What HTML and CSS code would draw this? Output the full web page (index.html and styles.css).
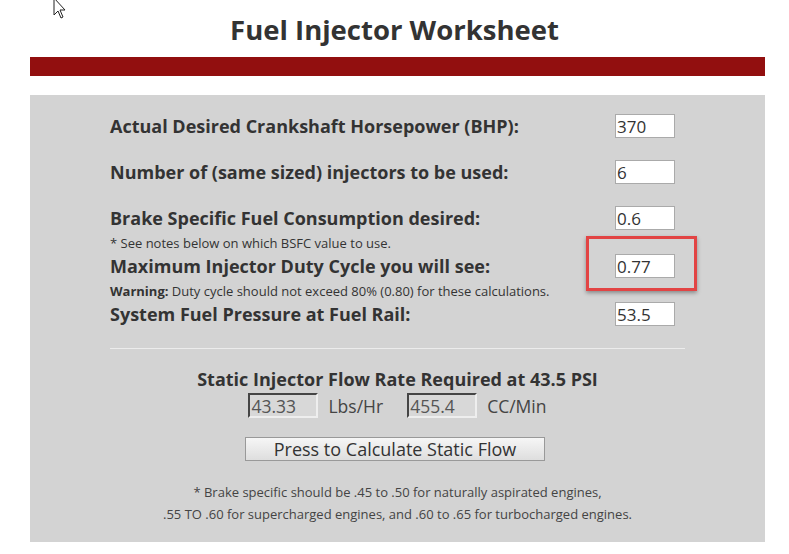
FILE: index.html
```html
<!DOCTYPE html>
<html>
<head>
  <meta charset="UTF-8">
  <title>Fuel Injector Worksheet</title>
  <link rel="stylesheet" href="styles.css">
</head>
<body>
  <svg class="cursor" width="14" height="20" viewBox="0 0 14 20">
    <path d="M1 -2 L1 15 L5 11 L8 18 L10 17 L7 10 L12 10 Z" fill="#fff" stroke="#222" stroke-width="1"/>
  </svg>

  <h1 class="title">Fuel Injector Worksheet</h1>
  <div class="red-bar"></div>

  <div class="panel">
    <div class="inner">
      <div class="row">
        <label for="bhp">Actual Desired Crankshaft Horsepower (BHP):</label>
        <input id="bhp" type="text" value="370">
      </div>
      <div class="row">
        <label for="count">Number of (same sized) injectors to be used:</label>
        <input id="count" type="text" value="6">
      </div>
      <div class="row tight">
        <label for="bsfc">Brake Specific Fuel Consumption desired:</label>
        <input id="bsfc" type="text" value="0.6">
      </div>
      <p class="note">* See notes below on which BSFC value to use.</p>
      <div class="row tight">
        <label for="duty">Maximum Injector Duty Cycle you will see:</label>
        <span class="field-wrap">
          <input id="duty" type="text" value="0.77">
          <span class="highlight"></span>
        </span>
      </div>
      <p class="note"><b>Warning:</b> Duty cycle should not exceed 80% (0.80) for these calculations.</p>
      <div class="row">
        <label for="psi">System Fuel Pressure at Fuel Rail:</label>
        <input id="psi" type="text" value="53.5">
      </div>

      <hr class="divider">

      <h2 class="result-title">Static Injector Flow Rate Required at 43.5 PSI</h2>
      <div class="result-row">
        <input class="out" type="text" value="43.33" readonly>
        <span class="unit">Lbs/Hr</span>
        <input class="out" type="text" value="455.4" readonly>
        <span class="unit">CC/Min</span>
      </div>
      <div class="btn-row">
        <button type="button">Press to Calculate Static Flow</button>
      </div>

      <div class="footnote">
        <p>* Brake specific should be .45 to .50 for naturally aspirated engines,</p>
        <p>.55 TO .60 for supercharged engines, and .60 to .65 for turbocharged engines.</p>
      </div>
    </div>
  </div>
</body>
</html>
```

FILE: styles.css
```css
body {
  margin: 0;
  font-family: "Open Sans", Arial, sans-serif;
  color: #333;
  background-color: #fff;
}

.cursor {
  position: absolute;
  left: 53px;
  top: 0;
}

.title {
  font-size: 27.5px;
  line-height: 36px;
  font-weight: bold;
  text-align: center;
  margin: 12px 0 9px;
  color: #333;
}

.red-bar {
  height: 19px;
  margin: 0 24px 19px 30px;
  background-color: #920f0f;
}

.panel {
  margin: 0 24px 0 30px;
  background-color: #d3d3d3;
  padding: 19px 0 17px;
}

.inner {
  width: 575px;
  margin-left: 80px;
}

.row {
  display: flex;
  align-items: center;
  height: 24px;
  padding-right: 10px;
  margin-bottom: 22px;
}

.row.tight {
  margin-bottom: 0;
}

.row label {
  flex: 1;
  font-size: 18px;
  font-weight: bold;
  color: #333;
}

.row input {
  width: 60px;
  height: 24px;
  box-sizing: border-box;
  border: 1px solid #aaa;
  background: #fff;
  font-family: "Open Sans", Arial, sans-serif;
  font-size: 17px;
  color: #333;
  padding: 0 1px;
}

.field-wrap {
  position: relative;
  display: inline-block;
  height: 24px;
}

.highlight {
  position: absolute;
  left: -29px;
  top: -18px;
  width: 111px;
  height: 55px;
  box-sizing: border-box;
  border: 3px solid #e24444;
  box-shadow: 0 2px 4px rgba(0,0,0,0.35);
}

.note {
  font-size: 13px;
  line-height: 14px;
  margin: 6px 0 4px;
  color: #333;
}

.divider {
  border: none;
  border-top: 1px solid #ececec;
  margin: 22px 0 0;
}

.result-title {
  font-size: 18px;
  line-height: 24px;
  font-weight: bold;
  text-align: center;
  margin: 18px 0 2px;
  color: #333;
}

.result-row {
  display: flex;
  justify-content: center;
  align-items: center;
  height: 25px;
}

.out {
  width: 70px;
  height: 25px;
  box-sizing: border-box;
  border: 2px inset #eee;
  border-top-color: #999;
  border-left-color: #999;
  background: #d8d8d8;
  font-family: "Open Sans", Arial, sans-serif;
  font-size: 17.5px;
  color: #555;
  padding: 0 1px;
}

.unit {
  font-size: 17.5px;
  color: #444;
  margin: 0 24px 0 10px;
}

.unit:last-child {
  margin-right: 0;
}

.btn-row {
  text-align: center;
  margin-top: 19px;
  padding-right: 5px;
}

button {
  width: 300px;
  height: 24px;
  border: 1px solid #999;
  background: linear-gradient(#f6f6f6, #dedede);
  font-family: "Open Sans", Arial, sans-serif;
  font-size: 18px;
  line-height: 20px;
  color: #333;
  padding: 0;
}

.footnote {
  margin-top: 20px;
  text-align: center;
  font-size: 13px;
  line-height: 22px;
  color: #444;
}

.footnote p {
  margin: 0;
}
```
